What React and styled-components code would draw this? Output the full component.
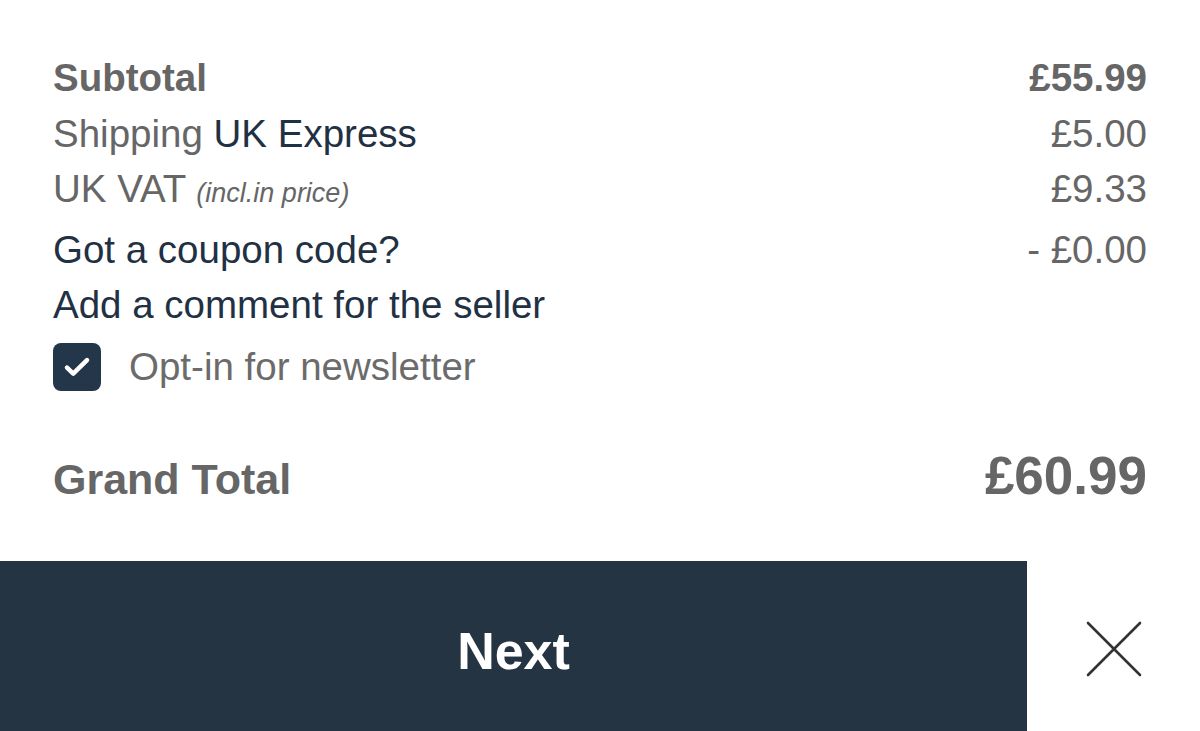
import React from "react";
import styled, { createGlobalStyle } from "styled-components";

const Global = createGlobalStyle`
  html, body { margin: 0; padding: 0; background: #fff; }
  body { font-family: "Liberation Sans", Arial, sans-serif; overflow: hidden; }
`;

const Page = styled.div`
  width: 1200px;
  height: 731px;
  display: flex;
  flex-direction: column;
  background: #fff;
  overflow: hidden;
`;

const Summary = styled.div`
  padding: 50px 53px 0 53px;
  display: flex;
  flex-direction: column;
`;

const Row = styled.div`
  display: flex;
  justify-content: space-between;
  align-items: baseline;
  font-size: 38.5px;
  line-height: 55.5px;
  color: #666666;
  font-weight: ${(p) => (p.$bold ? 700 : 400)};
`;

const Label = styled.span`
  color: ${(p) => (p.$dark ? "#1f3143" : "#666666")};
`;

const Note = styled.span`
  font-size: 27px;
  font-style: italic;
  color: #666666;
`;

const Amount = styled.span`
  color: #666666;
`;

const CheckRow = styled.label`
  display: flex;
  align-items: center;
  gap: 28px;
  margin-top: 10px;
  font-size: 38.5px;
  color: #6b6b6b;
`;

const Box = styled.span`
  width: 48px;
  height: 48px;
  border-radius: 8px;
  background: #23364a;
  display: flex;
  align-items: center;
  justify-content: center;
  flex: none;
`;

const TotalRow = styled.div`
  display: flex;
  justify-content: space-between;
  align-items: baseline;
  margin-top: 54px;
  color: #666666;
  font-weight: 700;
`;

const TotalLabel = styled.span`
  font-size: 43px;
`;

const TotalAmount = styled.span`
  font-size: 53px;
`;

const Footer = styled.div`
  margin-top: auto;
  height: 170px;
  display: flex;
`;

const NextButton = styled.button`
  width: 1027px;
  height: 100%;
  border: none;
  margin: 0;
  background: #243443;
  color: #ffffff;
  font-family: "Liberation Sans", Arial, sans-serif;
  font-weight: 700;
  font-size: 52px;
  padding: 10px 0 0 0;
  cursor: pointer;
`;

const Close = styled.button`
  flex: 1;
  border: none;
  background: #fff;
  display: flex;
  align-items: center;
  justify-content: center;
  padding: 6px 0 0 0;
  cursor: pointer;
`;

export default function App() {
  return (
    <Page>
      <Global />
      <Summary>
        <Row $bold>
          <span>Subtotal</span>
          <Amount>£55.99</Amount>
        </Row>
        <Row>
          <span>
            Shipping <Label $dark>UK Express</Label>
          </span>
          <Amount>£5.00</Amount>
        </Row>
        <Row>
          <span>
            UK VAT <Note>(incl.in price)</Note>
          </span>
          <Amount>£9.33</Amount>
        </Row>
        <Row>
          <Label $dark>Got a coupon code?</Label>
          <Amount>- £0.00</Amount>
        </Row>
        <Row>
          <Label $dark>Add a comment for the seller</Label>
        </Row>
        <CheckRow>
          <Box>
            <svg width="30" height="30" viewBox="0 0 24 24" fill="none">
              <path
                d="M4 12.5l5 4.8L20 6.5"
                stroke="#fff"
                strokeWidth="3.6"
                strokeLinecap="round"
                strokeLinejoin="round"
              />
            </svg>
          </Box>
          <span>Opt-in for newsletter</span>
        </CheckRow>
        <TotalRow>
          <TotalLabel>Grand Total</TotalLabel>
          <TotalAmount>£60.99</TotalAmount>
        </TotalRow>
      </Summary>
      <Footer>
        <NextButton>Next</NextButton>
        <Close aria-label="Close">
          <svg width="56" height="56" viewBox="0 0 56 56">
            <path
              d="M2 2L54 54M54 2L2 54"
              stroke="#333"
              strokeWidth="2.6"
              strokeLinecap="round"
            />
          </svg>
        </Close>
      </Footer>
    </Page>
  );
}
